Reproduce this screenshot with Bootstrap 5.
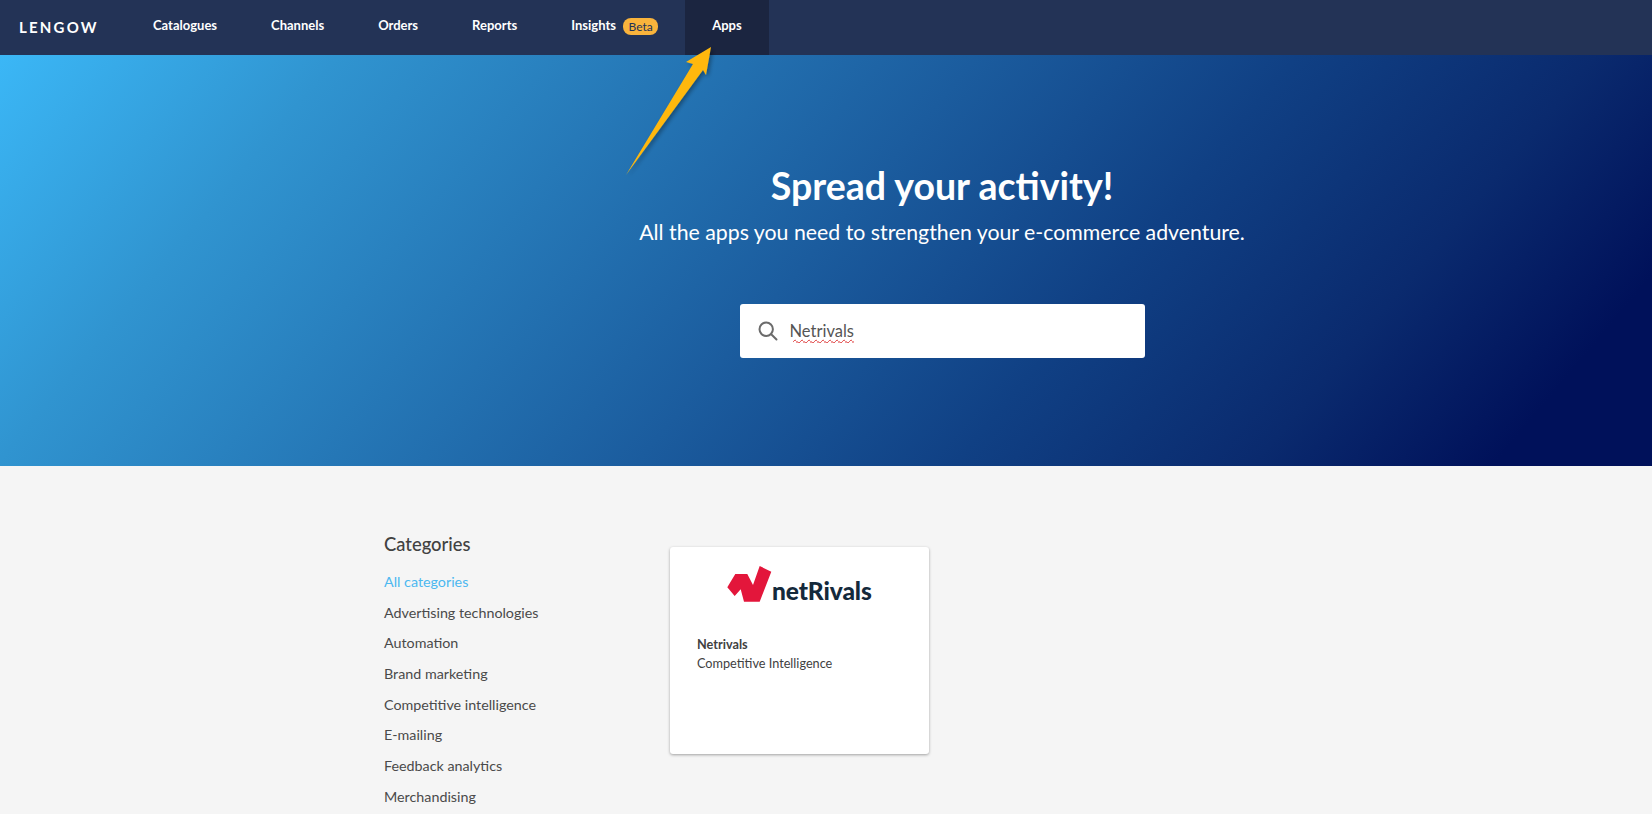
<!DOCTYPE html>
<html lang="en">
<head>
    <meta charset="UTF-8">
    <meta name="viewport" content="width=device-width, initial-scale=1.0">
    <title>Lengow Apps</title>
    <link rel="stylesheet" href="https://cdn.jsdelivr.net/npm/bootstrap@5.3.0/dist/css/bootstrap.min.css">
    <style>
        html, body { height: 814px; overflow: hidden; }
        body { font-family: Lato, "Liberation Sans", sans-serif; background-color: #f5f5f5; color: #414141; position: relative; }
        .top-bar { height: 55px; padding: 0; background-color: #233356; }
        .brand-text { width: 126px; padding-left: 19px; margin: 0; font-size: 15px; font-weight: 700; letter-spacing: 2.2px; color: #fff; }
        .top-bar .navbar-nav .nav-link { height: 55px; padding: 0 27px 4px; display: flex; align-items: center; font-size: 13px; font-weight: 700; color: #fff; }
        .top-bar .navbar-nav .nav-link.active { background-color: #1b2540; color: #fff; }
        .beta-tag { margin-left: 7px; margin-top: 2px; padding: 0 5.5px; height: 17px; line-height: 17px; border-radius: 8px; background-color: #f9b43c; color: #233257; font-size: 12px; font-weight: 400; }
        .hero-band { height: 411px; padding: 109px 0 0 232px; background: linear-gradient(130deg, #3bb7f6 0%, #3094d0 17%, #1b5c9e 49%, #104084 65%, #0a2a6e 80%, #00115a 92%); color: #fff; text-align: center; }
        .hero-title { font-size: 37.5px; font-weight: 700; line-height: 44px; margin: 0 0 9px; }
        .hero-sub { font-size: 21.3px; line-height: 30px; margin: 0; }
        .search-box { width: 405px; height: 54px; margin: 57px auto 0; padding: 0 18px; background: #fff; border-radius: 3px; }
        .search-icon { margin-right: 12px; flex: none; }
        .search-box input { border: 0; padding: 0; font-size: 16.5px; color: #555; background: transparent; box-shadow: none; text-decoration: underline wavy #d33 1px; text-underline-offset: 2px; }
        .page-wrap { width: 884px; margin: 0 auto; padding-top: 64px; }
        .side-col { width: 286px; flex: none; }
        .side-title { font-size: 18.4px; font-weight: 500; line-height: 28px; margin: 0 0 9px; color: #414141; }
        .side-col a { display: block; height: 30.7px; line-height: 30.7px; font-size: 14.3px; color: #4a4a4a; text-decoration: none; }
        .side-col a.current { color: #4cb8f0; }
        .app-tile { width: 259px; height: 207px; margin-top: 17px; border: 0; border-radius: 3px; background: #fff; box-shadow: 0 1px 3px rgba(0,0,0,.35); }
        .app-logo { height: 75px; padding-left: 55px; padding-top: 18px; }
        .logo-word { font-size: 24.5px; font-weight: 900; color: #14293b; line-height: 1; margin-top: 14px; letter-spacing: -.1px; }
        .app-info { padding: 13px 0 0 27px; font-size: 12.7px; line-height: 19px; color: #414141; }
        .app-info strong { display: block; font-weight: 700; }
        .arrow-mark { position: absolute; left: 620px; top: 40px; }
    </style>
</head>
<body>
    <nav class="navbar navbar-expand top-bar">
        <a class="navbar-brand brand-text" href="#">LENGOW</a>
        <ul class="navbar-nav">
            <li class="nav-item"><a class="nav-link" href="#">Catalogues</a></li>
            <li class="nav-item"><a class="nav-link" href="#">Channels</a></li>
            <li class="nav-item"><a class="nav-link" href="#">Orders</a></li>
            <li class="nav-item"><a class="nav-link" href="#">Reports</a></li>
            <li class="nav-item"><a class="nav-link" href="#">Insights <span class="beta-tag">Beta</span></a></li>
            <li class="nav-item"><a class="nav-link active" href="#">Apps</a></li>
        </ul>
    </nav>

    <section class="hero-band">
        <h1 class="hero-title">Spread your activity!</h1>
        <p class="hero-sub">All the apps you need to strengthen your e-commerce adventure.</p>
        <div class="search-box d-flex align-items-center">
            <svg class="search-icon" width="20" height="20" viewBox="0 0 20 20" fill="none" stroke="#6b6b6b" stroke-width="2"><circle cx="8.2" cy="8.2" r="6.7"/><path d="M13.2 13.2l5.3 5.3" stroke-linecap="round"/></svg>
            <input class="form-control" type="text" value="Netrivals" spellcheck="false">
        </div>
    </section>

    <div class="page-wrap d-flex">
        <div class="side-col">
            <h2 class="side-title">Categories</h2>
            <a class="current" href="#">All categories</a>
            <a href="#">Advertising technologies</a>
            <a href="#">Automation</a>
            <a href="#">Brand marketing</a>
            <a href="#">Competitive intelligence</a>
            <a href="#">E-mailing</a>
            <a href="#">Feedback analytics</a>
            <a href="#">Merchandising</a>
        </div>
        <div class="card app-tile">
            <div class="app-logo d-flex">
                <svg width="47" height="37" viewBox="0 0 47 37"><path fill="#e3163b" d="M2.3 22.3 L10.3 9 L22.3 9 L28 20 L34.7 1 L46.3 6.7 L34.7 36.7 L19 36.7 L15.7 24.3 L9.7 31 Z"/></svg>
                <span class="logo-word">netRivals</span>
            </div>
            <div class="app-info"><strong>Netrivals</strong>Competitive Intelligence</div>
        </div>
    </div>

    <svg class="arrow-mark" width="100" height="140" viewBox="0 0 100 140">
        <defs><filter id="arrowShade"><feDropShadow dx="2" dy="2" stdDeviation="2" flood-opacity=".35"/></filter></defs>
        <path fill="#ffb80c" filter="url(#arrowShade)" d="M6 135 L73 24 L66 22 L91 7 L86 35 L83 30 Z"/>
    </svg>
</body>
</html>
